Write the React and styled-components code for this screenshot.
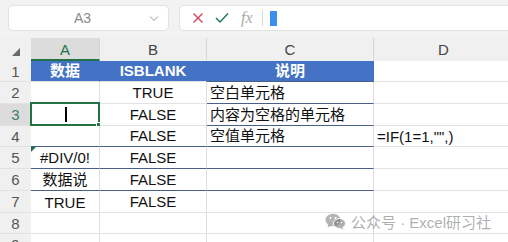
import React from 'react';
import styled, { createGlobalStyle } from 'styled-components';

const GlobalStyle = createGlobalStyle`
  body {
    margin: 0;
    background: #ffffff;
    overflow: hidden;
  }
`;

const Page = styled.div`
  position: relative;
  width: 508px;
  height: 242px;
  overflow: hidden;
  background: #ffffff;
  font-family: "Liberation Sans", "Noto Sans CJK SC", sans-serif;
`;

const TopBar = styled.div`
  display: flex;
  gap: 10px;
  height: 38px;
  padding: 5px 0 0 8px;
  box-sizing: border-box;
  background: #f2f2f2;
`;

const NameBox = styled.div`
  position: relative;
  width: 161px;
  height: 26px;
  box-sizing: border-box;
  border: 1px solid #e2e2e2;
  border-radius: 5px;
  background: #ffffff;
  display: flex;
  align-items: center;
  justify-content: center;
  color: #8a8a8a;
  font-size: 14px;
  padding-right: 12px;
`;

const Chevron = styled.svg`
  position: absolute;
  right: 9px;
  top: 9px;
`;

const FormulaBox = styled.div`
  flex: 1;
  height: 26px;
  margin-right: -10px;
  box-sizing: border-box;
  border: 1px solid #e2e2e2;
  border-radius: 5px;
  background: #ffffff;
  display: flex;
  align-items: center;
  padding-left: 12px;
  gap: 11px;
`;

const Fx = styled.span`
  font-family: "Liberation Serif", serif;
  font-style: italic;
  font-size: 16px;
  color: #a8a8a8;
  margin-left: 1px;
`;

const Divider = styled.span`
  width: 1px;
  height: 16px;
  background: #d8d8d8;
  margin-left: -2px;
`;

const Caret = styled.span`
  width: 7px;
  height: 15px;
  background: #3a8ef0;
  margin-left: -4px;
`;

const Sheet = styled.div`
  display: grid;
  grid-template-columns: 31px 69px 107px 167px 140px;
  grid-template-rows: 23px 21px 22px 22px 21px 22px 22px 22px 21px 22px;
`;

const Corner = styled.div`
  background: #f0f0f0;
  display: flex;
  align-items: center;
  justify-content: center;
  padding-top: 4px;
  box-sizing: border-box;
`;

const ColHead = styled.div`
  background: ${(p) => (p.$active ? '#dcdcdc' : '#f0f0f0')};
  color: ${(p) => (p.$active ? '#217346' : '#444444')};
  border-bottom: 2px solid ${(p) => (p.$active ? '#217346' : '#f0f0f0')};
  border-right: 1px solid #d6d6d6;
  box-sizing: border-box;
  display: flex;
  align-items: center;
  justify-content: center;
  font-size: 15px;
  padding-top: 2px;
`;

const RowHead = styled.div`
  background: ${(p) => (p.$active ? '#dcdcdc' : '#f0f0f0')};
  color: ${(p) => (p.$active ? '#3f7a66' : '#555555')};
  border-bottom: 1px solid #e2e2e2;
  box-sizing: border-box;
  display: flex;
  align-items: center;
  justify-content: center;
  font-size: 15px;
`;

const Cell = styled.div`
  position: relative;
  box-sizing: border-box;
  background: ${(p) => (p.$head ? '#4472c4' : '#ffffff')};
  color: ${(p) => (p.$head ? '#ffffff' : '#111111')};
  font-weight: ${(p) => (p.$head ? 700 : 400)};
  border-right: 1px solid ${(p) => (p.$head ? '#4472c4' : '#dedede')};
  border-bottom: 1px solid ${(p) => p.$line || '#e2e2e2'};
  display: flex;
  align-items: ${(p) => p.$valign || 'center'};
  justify-content: ${(p) => p.$align || 'center'};
  padding: 0 3px;
  font-size: 15px;
  white-space: nowrap;
  overflow: visible;
  line-height: 18px;
`;

const Selection = styled.div`
  position: absolute;
  left: -1px;
  top: -2px;
  right: -1px;
  bottom: -1px;
  border: 2px solid #217346;
  pointer-events: none;

  &::after {
    content: '';
    position: absolute;
    right: -5px;
    bottom: -5px;
    width: 5px;
    height: 5px;
    background: #217346;
    border: 1px solid #ffffff;
  }
`;

const TextCursor = styled.span`
  width: 2px;
  height: 15px;
  background: #000000;
  margin-left: 1px;
`;

const ErrorMark = styled.span`
  position: absolute;
  left: 0;
  top: 0;
  width: 0;
  height: 0;
  border-top: 5px solid #217346;
  border-right: 5px solid transparent;
`;

const Watermark = styled.div`
  position: absolute;
  left: 325px;
  top: 211px;
  display: flex;
  align-items: center;
  gap: 5px;
  color: rgba(120, 120, 120, 0.6);
  font-size: 15px;
  font-family: "Liberation Sans", "Noto Sans CJK SC", sans-serif;
`;

const DARK = '#4a5f86';

const rows = [
  { n: 1, cells: ['数据', 'ISBLANK', '说明'], head: true, lines: ['#e2e2e2', '#e2e2e2', DARK] },
  { n: 2, cells: ['', 'TRUE', '空白单元格'], lines: ['#e2e2e2', '#e2e2e2', DARK] },
  { n: 3, cells: ['', 'FALSE', '内容为空格的单元格'], lines: ['#e2e2e2', '#e2e2e2', DARK], selected: true },
  { n: 4, cells: ['', 'FALSE', '空值单元格'], lines: [DARK, DARK, DARK], d: '=IF(1=1,"",)' },
  { n: 5, cells: ['#DIV/0!', 'FALSE', ''], lines: [DARK, DARK, DARK], error: true },
  { n: 6, cells: ['数据说', 'FALSE', ''], lines: [DARK, DARK, DARK] },
  { n: 7, cells: ['TRUE', 'FALSE', ''], lines: [], lowA: true },
  { n: 8, cells: ['', '', ''], lines: [] },
  { n: 9, cells: ['', '', ''], lines: [] },
];

const WeChatIcon = () => (
  <svg width="21" height="17" viewBox="0 0 21 17">
    <ellipse cx="8" cy="7" rx="7.5" ry="6.3" fill="rgba(120,120,120,0.55)" />
    <path d="M3.5 11.5 L2.8 14.5 L6.2 12.6 Z" fill="rgba(120,120,120,0.55)" />
    <ellipse cx="14.5" cy="10.5" rx="6" ry="5" fill="rgba(120,120,120,0.6)" stroke="#ffffff" strokeWidth="1" />
    <path d="M17.5 14.3 L18.5 16.6 L15.6 15.2 Z" fill="rgba(120,120,120,0.6)" />
    <circle cx="5.5" cy="5" r="1" fill="#ffffff" />
    <circle cx="10.5" cy="5" r="1" fill="#ffffff" />
    <circle cx="12.5" cy="9.5" r="0.8" fill="#ffffff" />
    <circle cx="16.5" cy="9.5" r="0.8" fill="#ffffff" />
  </svg>
);

const App = () => (
  <Page>
    <GlobalStyle />
    <TopBar>
      <NameBox>
        A3
        <Chevron width="10" height="7" viewBox="0 0 10 7">
          <path d="M1 1.5 L5 5.5 L9 1.5" fill="none" stroke="#c4c4c4" strokeWidth="1.2" />
        </Chevron>
      </NameBox>
      <FormulaBox>
        <svg width="12" height="12" viewBox="0 0 12 12">
          <path d="M1.5 1.5 L10.5 10.5 M10.5 1.5 L1.5 10.5" stroke="#d2415a" strokeWidth="1.4" />
        </svg>
        <svg width="14" height="12" viewBox="0 0 14 12">
          <path d="M1 6 L5 10 L13 1.5" fill="none" stroke="#1f7a55" strokeWidth="1.5" />
        </svg>
        <Fx>fx</Fx>
        <Divider />
        <Caret />
      </FormulaBox>
    </TopBar>
    <Sheet>
      <Corner>
        <svg width="8" height="8" viewBox="0 0 8 8">
          <path d="M8 0 L8 8 L0 8 Z" fill="#6a6a6a" />
        </svg>
      </Corner>
      <ColHead $active>A</ColHead>
      <ColHead>B</ColHead>
      <ColHead>C</ColHead>
      <ColHead>D</ColHead>
      {rows.map((r) => (
        <React.Fragment key={r.n}>
          <RowHead $active={r.selected}>{r.n}</RowHead>
          <Cell $head={r.head} $line={r.lines[0]} $valign={r.lowA ? 'flex-end' : 'center'}>
            {r.error && <ErrorMark />}
            {r.selected && <TextCursor />}
            {r.selected && <Selection />}
            {r.cells[0]}
          </Cell>
          <Cell $head={r.head} $line={r.lines[1]}>
            {r.cells[1]}
          </Cell>
          <Cell $head={r.head} $line={r.lines[2]} $align={r.head ? 'center' : 'flex-start'}>
            {r.cells[2]}
          </Cell>
          <Cell $align="flex-start" $valign="flex-end">
            {r.d}
          </Cell>
        </React.Fragment>
      ))}
    </Sheet>
    <Watermark>
      <WeChatIcon />
      <span>公众号 · Excel研习社</span>
    </Watermark>
  </Page>
);

export default App;
